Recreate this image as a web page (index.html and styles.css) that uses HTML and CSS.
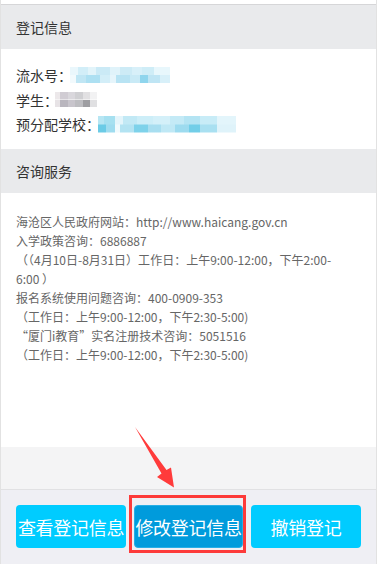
FILE: index.html
```html
<!DOCTYPE html>
<html lang="zh-CN">
<head>
<meta charset="utf-8">
<title>登记信息</title>
<link rel="stylesheet" href="styles.css">
</head>
<body>
<div class="page">
  <div class="top-strip"></div>
  <section class="section">
    <div class="section-head">登记信息</div>
    <div class="info-body">
      <div class="info-row"><span class="label">流水号：</span><span class="blur blur-id"></span></div>
      <div class="info-row"><span class="label">学生：</span><span class="blur blur-name"></span></div>
      <div class="info-row"><span class="label">预分配学校：</span><span class="blur blur-school"></span></div>
    </div>
  </section>
  <section class="section">
    <div class="section-head">咨询服务</div>
    <div class="service-body">
      <p>海沧区人民政府网站：http://www.haicang.gov.cn</p>
      <p>入学政策咨询：6886887</p>
      <p>（（4月10日-8月31日）工作日：上午9:00-12:00，下午2:00-<wbr>6:00 ）</p>
      <p>报名系统使用问题咨询：400-0909-353</p>
      <p>（工作日：上午9:00-12:00，下午2:30-5:00)</p>
      <p>“厦门i教育”实名注册技术咨询：5051516</p>
      <p>（工作日：上午9:00-12:00，下午2:30-5:00)</p>
    </div>
  </section>
  <div class="spacer"></div>
  <footer class="footer">
    <button class="btn">查看登记信息</button>
    <div class="btn-wrap">
      <button class="btn btn-primary">修改登记信息</button>
      <span class="highlight-box"></span>
    </div>
    <button class="btn">撤销登记</button>
  </footer>
  <svg class="arrow" width="380" height="564" viewBox="0 0 380 564" aria-hidden="true">
    <polygon points="135,427 166.5,470 171,467.5 174,487.5 157,477 161.5,473.5" fill="#ff3b3b"/>
  </svg>
</div>
</body>
</html>
```

FILE: styles.css
```css
* { box-sizing: border-box; }
html, body { margin: 0; padding: 0; background: #fff; }
body {
  width: 380px;
  height: 564px;
  overflow: hidden;
  font-family: "Noto Sans CJK SC", "Noto Sans", sans-serif;
}
.page {
  position: relative;
  width: 377px;
  height: 564px;
  border-left: 1px solid #e2e2e2;
  border-right: 1px solid #e2e2e2;
  display: flex;
  flex-direction: column;
}
.top-strip {
  height: 5px;
  background: #fff;
  border-bottom: 1px solid #d6d6d8;
  flex: none;
}
.section-head {
  height: 44px;
  background: #e9eaec;
  color: #333;
  font-size: 14px;
  line-height: 44px;
  padding-left: 15px;
}
.info-body {
  height: 100px;
  padding: 14px 15px 0;
  background: #fff;
}
.info-row {
  display: flex;
  align-items: center;
  height: 24.5px;
  font-size: 14px;
  color: #333;
}
.label { white-space: nowrap; }
.blur { display: inline-block; }
.blur-id {
  width: 100px;
  height: 16px;
  margin-left: -2px;
  background-image:
    linear-gradient(90deg, #eaf7fc 0 8%, #d2eef8 8% 18%, #e2f4fa 18% 26%, #cbeaf6 26% 40%, #e0f3fa 40% 50%, #cdebf6 50% 62%, #d8f0f9 62% 72%, #cfedf7 72% 84%, #e8f7fc 84% 100%),
    linear-gradient(90deg, #f2fafd 0 6%, #c0e6f4 6% 16%, #ade0f2 16% 30%, #d3eef8 30% 40%, #e6f5fb 40% 46%, #b8e3f3 46% 60%, #c9eaf6 60% 70%, #8fd5ed 70% 78%, #bfe5f4 78% 90%, #d8f0f9 90% 100%);
  background-size: 100% 50%, 100% 50%;
  background-position: top, bottom;
  background-repeat: no-repeat;
}
.blur-name {
  width: 42px;
  height: 15px;
  margin-left: -3px;
  background-image:
    linear-gradient(90deg, #ece8ea 0 12%, #d0ccd3 12% 30%, #d9d7dc 30% 48%, #cfcfd2 48% 66%, #e1e0e2 66% 84%, #f2f2f3 84% 100%),
    linear-gradient(90deg, #e7e3e6 0 12%, #b9b6be 12% 30%, #c8c5cc 30% 48%, #bdbdc1 48% 66%, #9e9ea2 66% 84%, #e0e0e2 84% 100%);
  background-size: 100% 50%, 100% 50%;
  background-position: top, bottom;
  background-repeat: no-repeat;
}
.blur-school {
  width: 138px;
  height: 17px;
  margin-left: -2px;
  background-image:
    linear-gradient(90deg, #b7e6f3 0 4%, #a6e0f0 4% 12%, #e4f5fb 12% 18%, #c2e9f5 18% 28%, #cdeef8 28% 40%, #d4f0f9 40% 52%, #c4eaf6 52% 62%, #b4e4f3 62% 74%, #c8ecf7 74% 86%, #e3f5fb 86% 100%),
    linear-gradient(90deg, #6bcbe6 0 6%, #9fdcef 6% 12%, #f0fafd 12% 16%, #b3e3f2 16% 26%, #7ed2ea 26% 36%, #a8def0 36% 46%, #bfe8f5 46% 56%, #9ddbef 56% 66%, #72cee8 66% 74%, #a9e0f1 74% 86%, #dff3fa 86% 100%);
  background-size: 100% 50%, 100% 50%;
  background-position: top, bottom;
  background-repeat: no-repeat;
}
.service-body {
  height: 254px;
  background: #fff;
  padding: 19px 24px 0 15px;
  color: #666;
  font-size: 12px;
  line-height: 19px;
}
.service-body p { margin: 0; }
.spacer {
  height: 43px;
  background: #f4f4f5;
  border-bottom: 1px solid #e1e1e3;
  flex: none;
}
.footer {
  flex: 1;
  background: #efeff4;
  padding: 15px 15px 0;
  display: grid;
  grid-template-columns: 110px 109px 110px;
  column-gap: 8px;
  align-content: start;
}
.btn {
  height: 43px;
  border: none;
  border-radius: 4px;
  background: #00ccff;
  color: #fff;
  font-family: "Noto Sans CJK SC", sans-serif;
  font-size: 18px;
  padding: 0;
  white-space: nowrap;
  overflow: visible;
  letter-spacing: -0.3px;
}
.btn-wrap { position: relative; }
.btn-primary {
  width: 100%;
  background: #009bdc;
  border: 1px solid #27aee6;
}
.highlight-box {
  position: absolute;
  top: -10px;
  left: -5px;
  right: -3px;
  bottom: -5px;
  border: 3px solid #fd3a3a;
  pointer-events: none;
}
.arrow {
  position: absolute;
  left: -1px;
  top: 0;
  pointer-events: none;
}
```
